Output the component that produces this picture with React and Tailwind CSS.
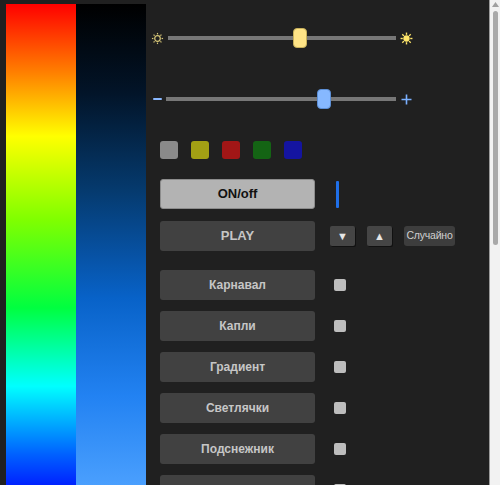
import { useState } from "react";

const effects = ["Карнавал", "Капли", "Градиент", "Светлячки", "Подснежник", ""];
const swatches = ["bg-[#8a8a8a]", "bg-[#a3a014]", "bg-[#a11616]", "bg-[#146414]", "bg-[#1414a0]"];

function SunOutline() {
  return (
    <svg width="13" height="13" viewBox="0 0 14 14" className="text-[#d6c677]">
      <circle cx="7" cy="7" r="3" fill="none" stroke="currentColor" strokeWidth="1.3" />
      {[0, 45, 90, 135, 180, 225, 270, 315].map((a) => (
        <line
          key={a}
          x1="7"
          y1="1"
          x2="7"
          y2="2.6"
          stroke="currentColor"
          strokeWidth="1.3"
          transform={`rotate(${a} 7 7)`}
        />
      ))}
    </svg>
  );
}

function SunFilled() {
  return (
    <svg width="13" height="13" viewBox="0 0 14 14" className="text-[#ffe66a]">
      <circle cx="7" cy="7" r="3.4" fill="currentColor" />
      {[0, 45, 90, 135, 180, 225, 270, 315].map((a) => (
        <line
          key={a}
          x1="7"
          y1="0.6"
          x2="7"
          y2="3"
          stroke="currentColor"
          strokeWidth="1.5"
          transform={`rotate(${a} 7 7)`}
        />
      ))}
    </svg>
  );
}

function Plus() {
  return (
    <svg width="11" height="11" viewBox="0 0 11 11" className="text-[#7ab0ff]">
      <path d="M5.5 0.5v10M0.5 5.5h10" stroke="currentColor" strokeWidth="1.6" />
    </svg>
  );
}

function Slider({ left, right, pos, thumb, start, end }) {
  return (
    <div className="flex items-center h-[20px] w-[262px]">
      <div className={`w-[13px] flex justify-center ${start}`}>{left}</div>
      <div className="relative flex-1 h-[4px] bg-[#777]">
        <div
          className={`absolute top-1/2 -translate-y-1/2 -translate-x-1/2 w-[14px] h-[20px] rounded-[4px] ${thumb}`}
          style={{ left: `${pos}%` }}
        />
      </div>
      <div className={`w-[13px] flex justify-center ${end}`}>{right}</div>
    </div>
  );
}

function Btn({ children, className = "" }) {
  return (
    <button
      className={`w-[155px] h-[30px] rounded-[3px] text-[12px] font-bold ${className}`}
    >
      {children}
    </button>
  );
}

export default function App() {
  const [checked] = useState({});

  return (
    <div className="w-[500px] h-[485px] overflow-hidden flex bg-[#202020] font-['Liberation_Sans',Arial,sans-serif]">
      {/* hue + brightness strips */}
      <div className="flex pl-[6px] pt-[4px] shrink-0">
        <div className="w-[70px] h-[490px] bg-[linear-gradient(to_bottom,#ff0000_0%,#ff8000_14%,#ffff00_27%,#80ff00_44%,#00ff40_62%,#00ffff_78%,#0060ff_92%,#0010ff_100%)]" />
        <div className="w-[70px] h-[490px] bg-[linear-gradient(to_bottom,#000000_0%,#021428_18%,#053a6e_38%,#0862c8_60%,#2282f2_80%,#4ea2ff_100%)]" />
      </div>

      <div className="flex-1 pt-[28px] pl-[5px] pr-[8px]">
        <Slider
          left={<SunOutline />}
          right={<SunFilled />}
          pos={58}
          thumb="bg-[#ffe486] border border-[#c7b05a]"
          start="mr-[4px]"
          end="ml-[4px]"
        />

        <div className="mt-[41px]">
          <Slider
            left={<div className="w-[9px] h-[2px] bg-[#8ab8ff] rounded-full" />}
            right={<Plus />}
            pos={68.5}
            thumb="bg-[#86b8ff] border border-[#5c8fd6]"
            start="mr-[2px]"
            end="ml-[4px]"
          />
        </div>

        <div className="mt-[32px] pl-[9px] flex gap-[13px]">
          {swatches.map((c) => (
            <div key={c} className={`w-[18px] h-[18px] rounded-[3px] ${c}`} />
          ))}
        </div>

        <div className="mt-[20px] pl-[9px] flex items-center">
          <Btn className="bg-[#b3b3b3] border border-[#8c8c8c] text-[#111] text-[13px]">
            ON/off
          </Btn>
          <div className="ml-[21px] w-[3px] h-[27px] bg-[#1f6fe8] rounded-[1px]" />
        </div>

        <div className="mt-[12px] pl-[9px] flex items-center">
          <Btn className="bg-[#414141] text-[#c6c6c6] text-[13px]">PLAY</Btn>
          <button className="ml-[15px] w-[25px] h-[20px] bg-[#454545] rounded-[2px] text-[#e6e6e6] text-[11px] shadow-[1px_1px_0_#111]">
            ▼
          </button>
          <button className="ml-[12px] w-[25px] h-[20px] bg-[#454545] rounded-[2px] text-[#e6e6e6] text-[11px] shadow-[1px_1px_0_#111]">
            ▲
          </button>
          <button className="ml-[12px] w-[51px] h-[20px] bg-[#3d3d3d] rounded-[3px] text-[#cfcfcf] text-[10.5px] tracking-[-0.2px]">
            Случайно
          </button>
        </div>

        <div className="mt-[19px] pl-[9px] flex flex-col gap-[11px]">
          {effects.map((name, i) => (
            <div key={i} className="flex items-center">
              <Btn className="bg-[#414141] text-[#c6c6c6]">{name}</Btn>
              <div
                className={`ml-[19px] w-[12px] h-[12px] rounded-[2px] ${
                  checked[i] ? "bg-[#1f6fe8]" : "bg-[#bdbdbd]"
                }`}
              />
            </div>
          ))}
        </div>
      </div>

      {/* page scrollbar */}
      <div className="w-[11px] shrink-0 border-l border-[#9a9a9a] bg-[#f2f2f2] flex flex-col items-center">
        <svg width="7" height="5" viewBox="0 0 7 5" className="mt-[2px]">
          <polygon points="3.5,0 7,5 0,5" fill="#a0a0a0" />
        </svg>
        <div className="mt-[4px] w-[5px] h-[234px] rounded-full bg-[#a9a9a9]" />
      </div>
    </div>
  );
}
